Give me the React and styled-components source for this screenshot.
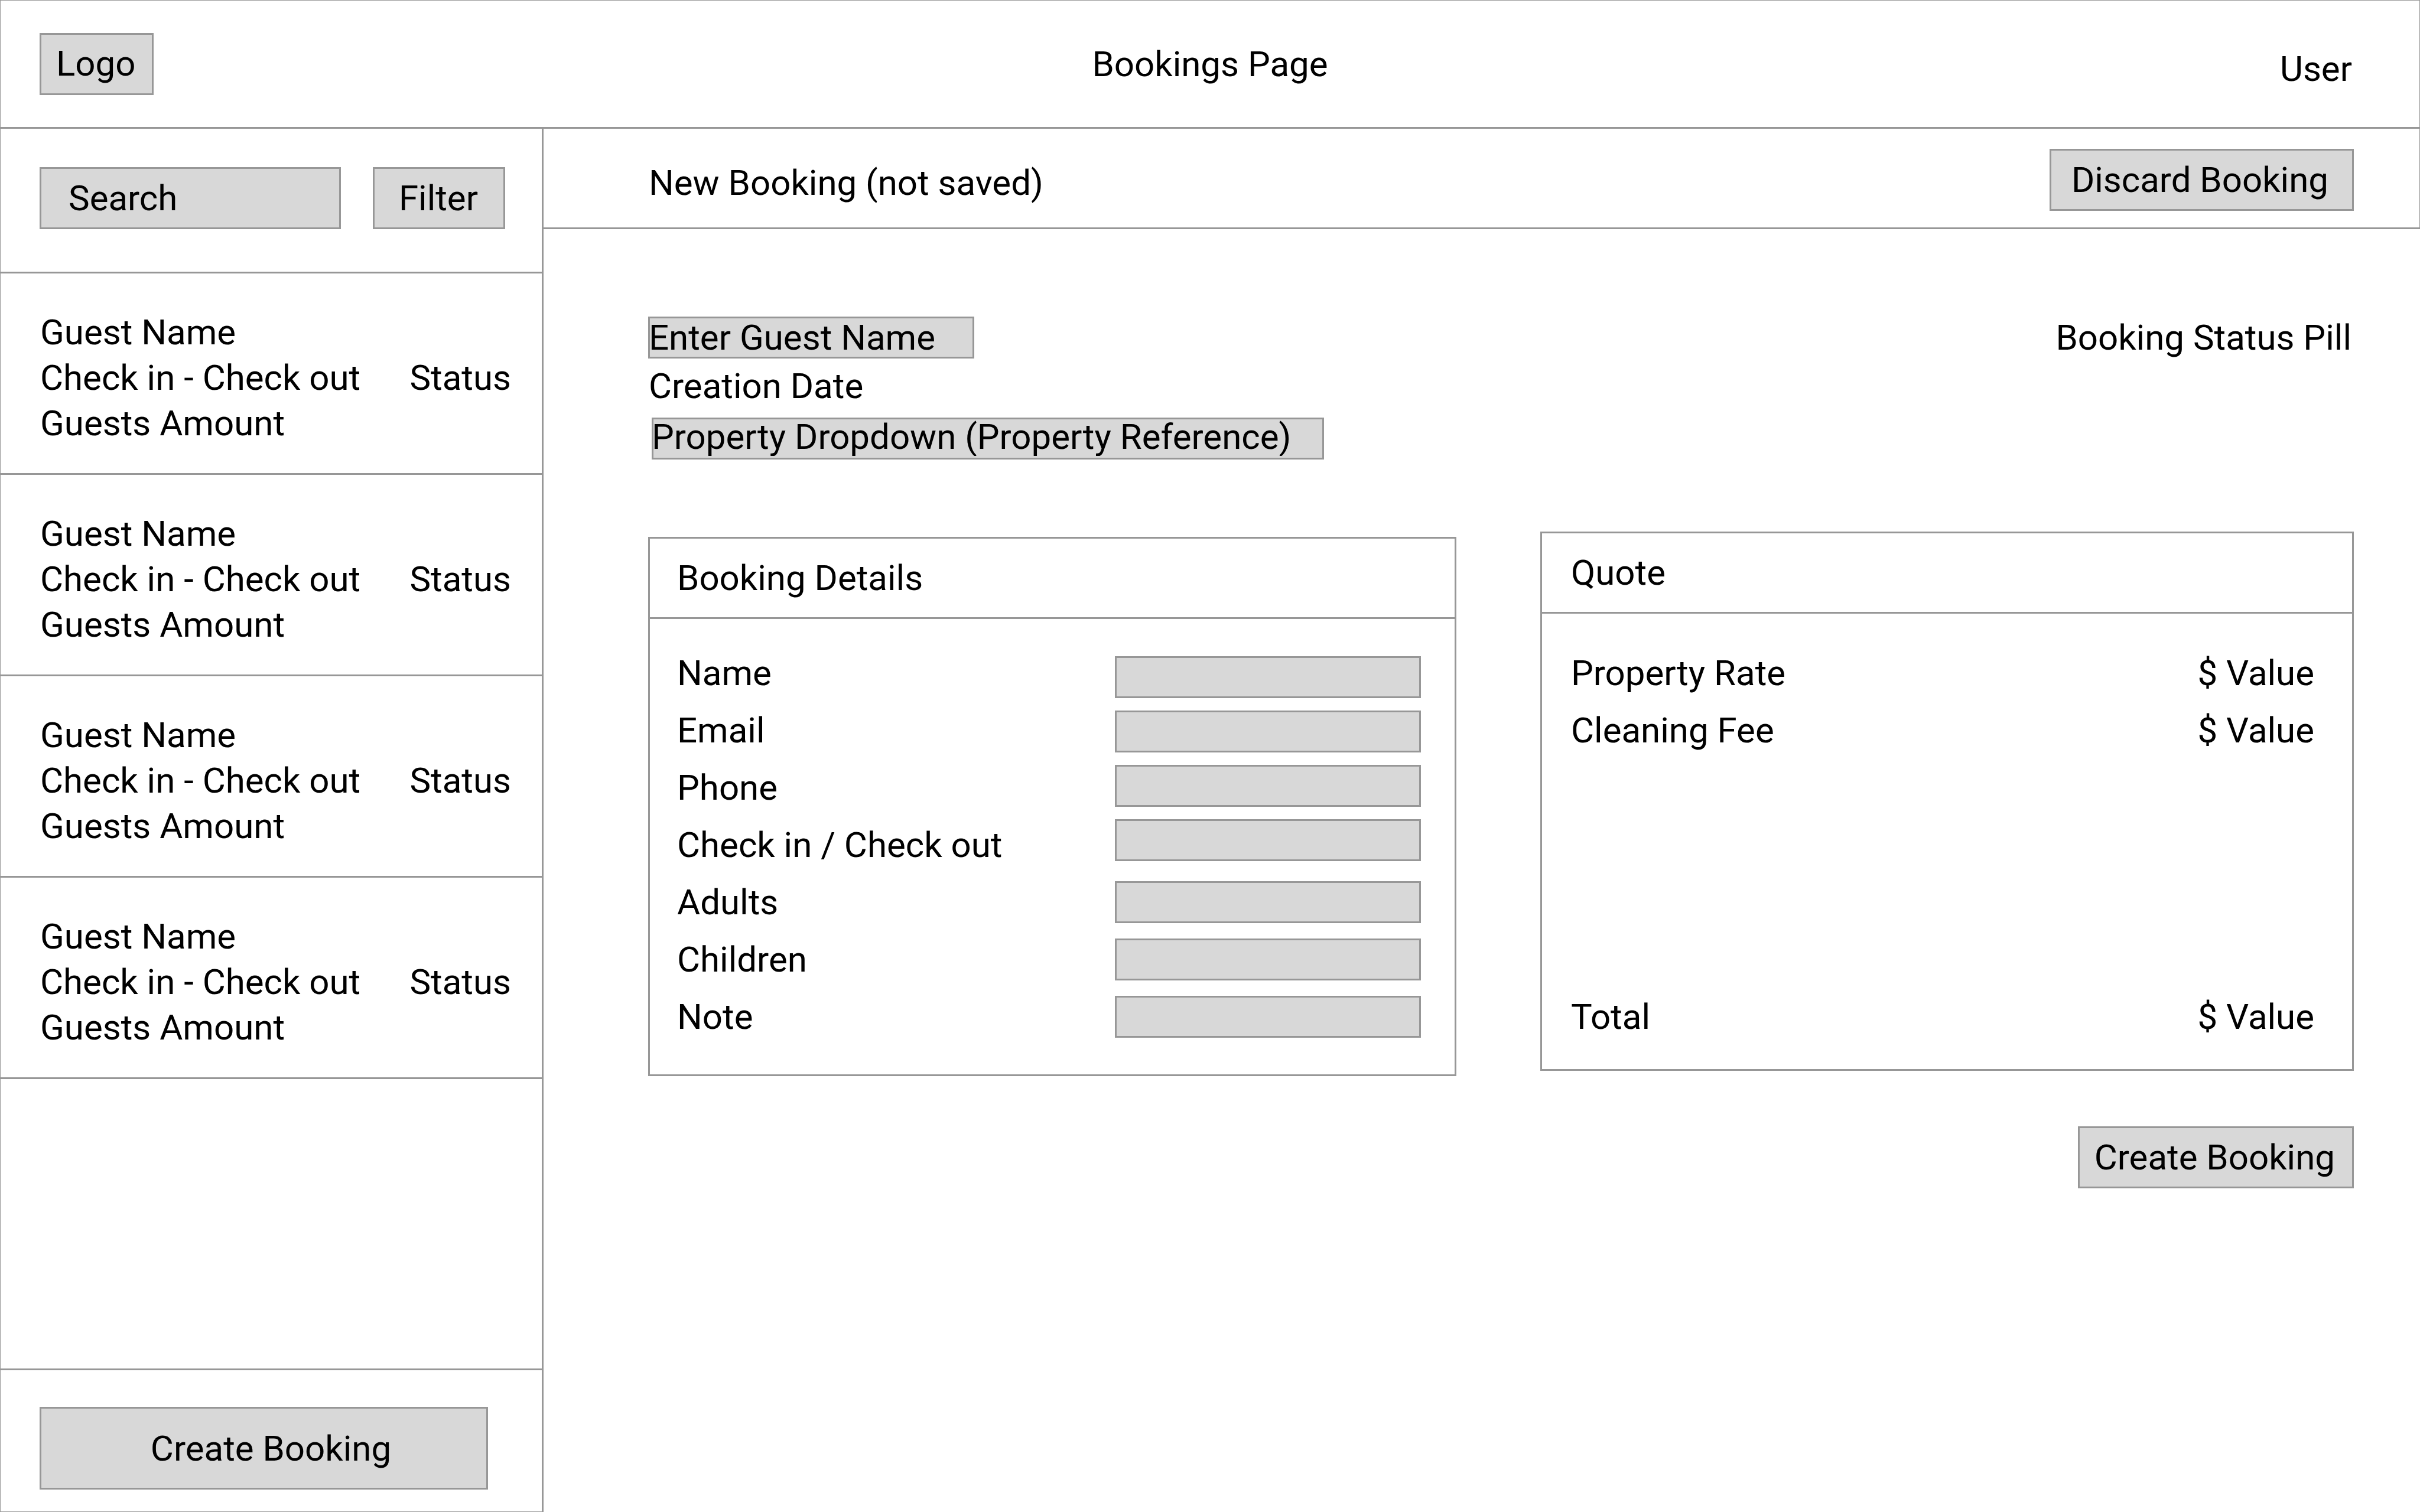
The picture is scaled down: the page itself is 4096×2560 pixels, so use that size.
import React from "react";
import styled, { createGlobalStyle, css } from "styled-components";

const line = "#979797";
const fill = "#d8d8d8";

const GlobalStyle = createGlobalStyle`
  *, *::before, *::after { box-sizing: border-box; }
  body {
    margin: 0;
    background: #fff;
    color: #000;
    font: 400 60px/77px Roboto, "Liberation Sans", sans-serif;
  }
  h1, h2, p, ul, dl, dd { margin: 0; padding: 0; font: inherit; }
  ul { list-style: none; }
  a { color: inherit; text-decoration: none; }
  button, input, select { margin: 0; font: inherit; color: inherit; }
`;

const box = css`
  border: 0;
  border-radius: 0;
  background: ${fill};
  box-shadow: inset 0 0 0 3px ${line};
`;

const Page = styled.div`
  display: flex;
  flex-direction: column;
  min-height: 100vh;
`;

const Header = styled.header`
  display: grid;
  grid-template-columns: 1fr auto 1fr;
  align-items: center;
  min-height: 218px;
  padding: 0 66px;
  border: 1px solid ${line};
  border-bottom-width: 3px;
`;

const Logo = styled.a`
  ${box}
  justify-self: start;
  height: 105px;
  padding: 0 31px 0 28px;
  line-height: 103px;
`;

const UserLink = styled.a`
  justify-self: end;
  padding: 16px 48px 0 0;
`;

const Columns = styled.div`
  display: flex;
  flex: 1;
`;

const Sidebar = styled.aside`
  display: flex;
  flex-direction: column;
  flex: none;
  width: 920px;
  border: solid ${line};
  border-width: 0 3px 1px 1px;
`;

const SearchBar = styled.form`
  display: flex;
  gap: 54px;
  padding: 65px 62px 72px 66px;
  border-bottom: 3px solid ${line};
`;

const Button = styled.button`
  ${box}
  flex: none;
  height: ${(p) => p.$height || 105}px;
  padding: ${(p) => p.$padding};
  text-align: center;
  white-space: nowrap;
  cursor: pointer;
`;

const Input = styled.input`
  ${box}
  appearance: none;
  display: block;
  width: ${(p) => (p.$width ? `${p.$width}px` : "100%")};
  height: 71px;
  padding: 0 1px;
  outline: none;
  &::placeholder { color: #000; opacity: 1; }
`;

const SearchInput = styled(Input)`
  flex: 1;
  min-width: 0;
  height: 105px;
  padding: 0 49px;
`;

const Guest = styled.li`
  display: flex;
  align-items: center;
  justify-content: space-between;
  padding: 61px 52px 46px 67px;
  border-bottom: 3px solid ${line};
`;

const SidebarFooter = styled.div`
  display: grid;
  margin-top: auto;
  padding: 62px 91px 37px 66px;
  border-top: 3px solid ${line};
`;

const Content = styled.div`
  flex: 1;
  min-width: 0;
`;

const Toolbar = styled.div`
  display: flex;
  align-items: center;
  justify-content: space-between;
  padding: 34px 111px 28px 178px;
  border: solid ${line};
  border-width: 0 1px 3px 0;
`;

const ToolbarTitle = styled.h2`
  padding-top: 10px;
`;

const Main = styled.main`
  display: grid;
  grid-template-columns: 152fr 153fr;
  gap: 142px;
  padding: 148px 112px 148px 177px;
`;

const Column = styled.div`
  display: flex;
  flex-direction: column;
  min-width: 0;
`;

const Identity = styled.div`
  display: flex;
  flex-direction: column;
  gap: 8px;
  margin-bottom: 131px;
`;

const CreationDate = styled.p`
  padding-left: 1px;
`;

const PropertyField = styled.div`
  padding: 7px 0 0 6px;
`;

const Select = styled.select`
  ${box}
  appearance: none;
  display: block;
  width: 1138px;
  height: 71px;
  padding: 0 0 6px;
  line-height: 65px;
  outline: none;
`;

const StatusPill = styled.p`
  margin-bottom: 293px;
  padding-right: 4px;
  line-height: 71px;
  text-align: right;
`;

const Card = styled.section`
  border: 3px solid ${line};
`;

const CardTitle = styled.h2`
  padding: 28px ${(p) => p.$inset}px;
  border-bottom: 3px solid ${line};
`;

const DetailsBody = styled.form`
  display: flex;
  justify-content: space-between;
  padding: 53px 57px 59px 46px;
`;

const Stack = styled.div`
  display: flex;
  flex-direction: column;
  gap: ${(p) => p.$gap}px;
`;

const Fields = styled(Stack)`
  width: 518px;
  padding-top: 10px;
`;

const QuoteBody = styled.dl`
  display: flex;
  flex-direction: column;
  gap: 20px;
  padding: 62px 64px 50px 49px;
`;

const QuoteLine = styled.div`
  display: flex;
  justify-content: space-between;
  padding-top: ${(p) => (p.$total ? 388 : 0)}px;
`;

const Actions = styled.div`
  display: flex;
  justify-content: flex-end;
  padding-top: 94px;
`;

const guests = [1, 2, 3, 4];

const fieldGroups = [
  {
    gap: 21,
    fields: [
      ["name", "Name"],
      ["email", "Email"],
      ["phone", "Phone"],
      ["dates", "Check in / Check out"],
    ],
  },
  {
    gap: 26,
    fields: [
      ["adults", "Adults"],
      ["children", "Children"],
      ["note", "Note"],
    ],
  },
];

const quoteLines = [
  { label: "Property Rate" },
  { label: "Cleaning Fee" },
  { label: "Total", total: true },
];

export default function App() {
  return (
    <Page>
      <GlobalStyle />
      <Header>
        <Logo href="#">Logo</Logo>
        <h1>Bookings Page</h1>
        <UserLink href="#user">User</UserLink>
      </Header>
      <Columns>
        <Sidebar>
          <SearchBar onSubmit={(e) => e.preventDefault()}>
            <SearchInput type="text" placeholder="Search" aria-label="Search" />
            <Button type="button" $padding="0 46px 0 44px">Filter</Button>
          </SearchBar>
          <ul>
            {guests.map((id) => (
              <Guest key={id}>
                <div>
                  <p>Guest Name</p>
                  <p>Check in - Check out</p>
                  <p>Guests Amount</p>
                </div>
                <span>Status</span>
              </Guest>
            ))}
          </ul>
          <SidebarFooter>
            <Button type="button" $height={140} $padding="0 0 0 24px">Create Booking</Button>
          </SidebarFooter>
        </Sidebar>
        <Content>
          <Toolbar>
            <ToolbarTitle>New Booking (not saved)</ToolbarTitle>
            <Button type="button" $padding="0 43px 0 37px">Discard Booking</Button>
          </Toolbar>
          <Main>
            <Column>
              <Identity>
                <Input $width={552} placeholder="Enter Guest Name" aria-label="Guest name" />
                <CreationDate>Creation Date</CreationDate>
                <PropertyField>
                  <Select aria-label="Property">
                    <option>Property Dropdown (Property Reference)</option>
                  </Select>
                </PropertyField>
              </Identity>
              <Card>
                <CardTitle $inset={46}>Booking Details</CardTitle>
                <DetailsBody onSubmit={(e) => e.preventDefault()}>
                  <Stack $gap={20}>
                    {fieldGroups.flatMap((group) =>
                      group.fields.map(([id, label]) => (
                        <label key={id} htmlFor={id}>{label}</label>
                      ))
                    )}
                  </Stack>
                  <Fields $gap={34}>
                    {fieldGroups.map((group) => (
                      <Stack key={group.gap} $gap={group.gap}>
                        {group.fields.map(([id]) => (
                          <Input key={id} id={id} />
                        ))}
                      </Stack>
                    ))}
                  </Fields>
                </DetailsBody>
              </Card>
            </Column>
            <Column>
              <StatusPill>Booking Status Pill</StatusPill>
              <Card>
                <CardTitle $inset={49}>Quote</CardTitle>
                <QuoteBody>
                  {quoteLines.map(({ label, total }) => (
                    <QuoteLine key={label} $total={total}>
                      <dt>{label}</dt>
                      <dd>$ Value</dd>
                    </QuoteLine>
                  ))}
                </QuoteBody>
              </Card>
              <Actions>
                <Button type="button" $padding="0 32px 0 28px">Create Booking</Button>
              </Actions>
            </Column>
          </Main>
        </Content>
      </Columns>
    </Page>
  );
}
